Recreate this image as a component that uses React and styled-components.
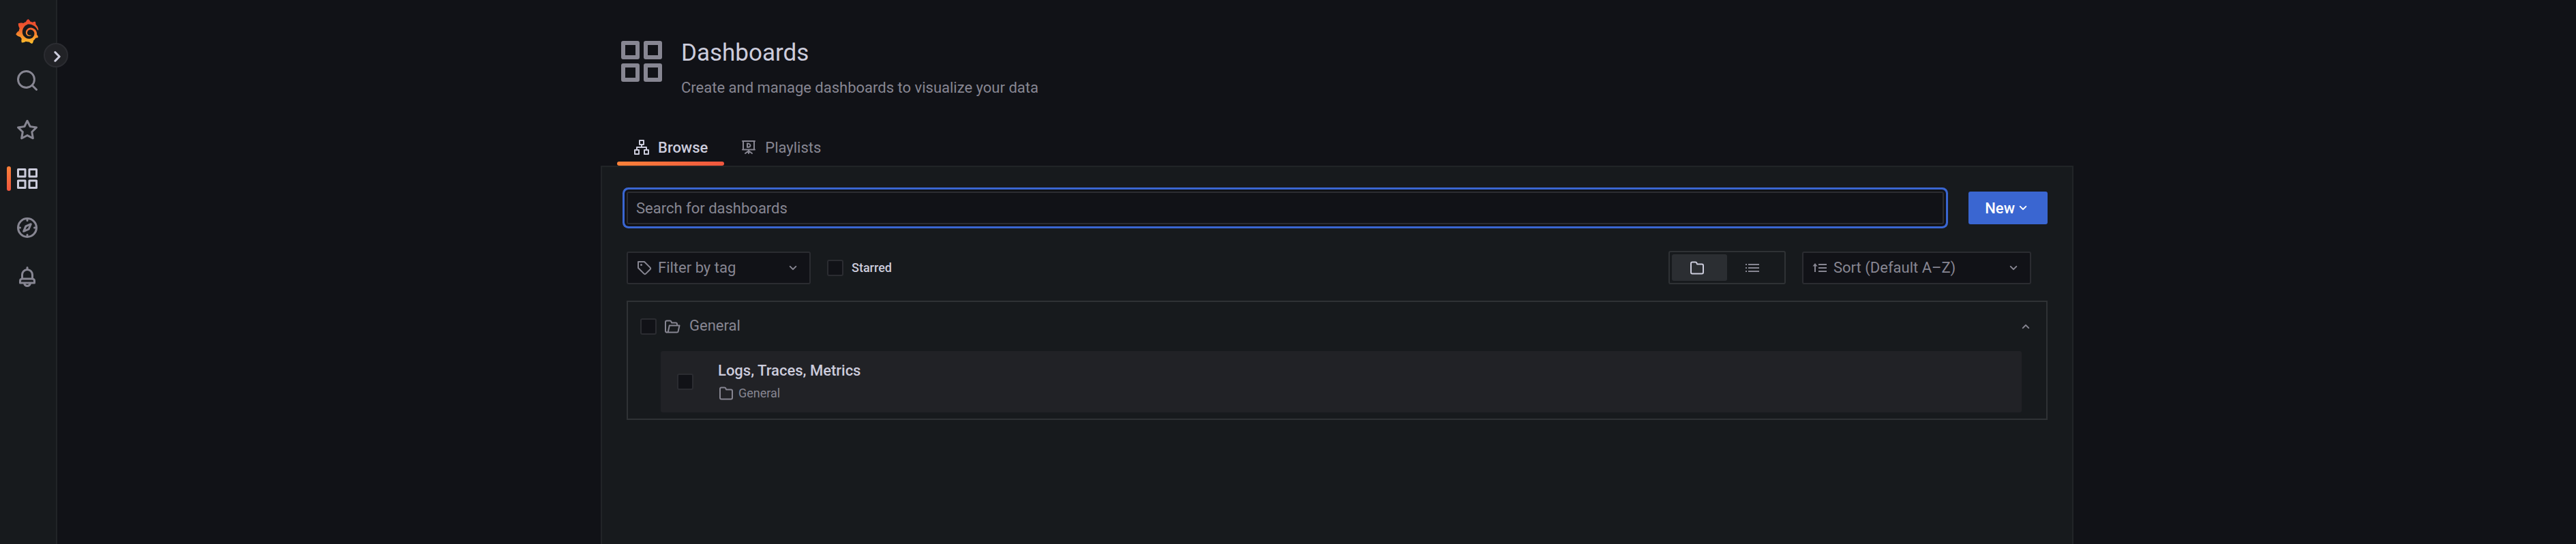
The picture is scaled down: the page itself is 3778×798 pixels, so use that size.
import React from "react";
import styled, { createGlobalStyle } from "styled-components";

const c = {
  canvas: "#111217",
  panel: "#171a1d",
  raised: "#212226",
  border: "#2b2c31",
  panelBorder: "#212427",
  sectionBorder: "#2f3235",
  text: "#ccccdc",
  muted: "#878692",
  blue: "#3a66d1",
};

const Global = createGlobalStyle`
  *, *::before, *::after { box-sizing: border-box; }
  body {
    margin: 0;
    background: ${c.canvas};
    color: ${c.text};
    font-family: Roboto, "Liberation Sans", sans-serif;
    font-size: 22px;
    line-height: 33px;
  }
  button, input, select { font: inherit; color: inherit; }
  h1, h2, h3, p { margin: 0; font-weight: 400; }
`;

const shapes = {
  search: <path d="M21.71,20.29,18,16.61A9,9,0,1,0,16.61,18l3.68,3.68a1,1,0,0,0,1.42,0A1,1,0,0,0,21.71,20.29ZM11,18a7,7,0,1,1,7-7A7,7,0,0,1,11,18Z" />,
  star: <path d="M22,9.67A1,1,0,0,0,21.14,9l-5.69-.83L12.9,3a1,1,0,0,0-1.8,0L8.55,8.16,2.86,9a1,1,0,0,0-.81.68,1,1,0,0,0,.25,1l4.13,4-1,5.68A1,1,0,0,0,6.9,21.44L12,18.77l5.1,2.67a.93.93,0,0,0,.46.12,1,1,0,0,0,.59-.19,1,1,0,0,0,.4-1l-1-5.68,4.13-4A1,1,0,0,0,22,9.67Zm-6.15,4a1,1,0,0,0-.29.88l.72,4.2-3.76-2a1.06,1.06,0,0,0-.94,0l-3.76,2,.72-4.2a1,1,0,0,0-.29-.88l-3-3,4.21-.61a1,1,0,0,0,.76-.55L12,5.7l1.88,3.82a1,1,0,0,0,.76.55l4.21.61Z" />,
  apps: <path d="M10,13H3a1,1,0,0,0-1,1v7a1,1,0,0,0,1,1h7a1,1,0,0,0,1-1V14A1,1,0,0,0,10,13ZM9,20H4V15H9ZM21,2H14a1,1,0,0,0-1,1v7a1,1,0,0,0,1,1h7a1,1,0,0,0,1-1V3A1,1,0,0,0,21,2ZM20,9H15V4h5Zm1,4H14a1,1,0,0,0-1,1v7a1,1,0,0,0,1,1h7a1,1,0,0,0,1-1V14A1,1,0,0,0,21,13Zm-1,7H15V15h5ZM10,2H3A1,1,0,0,0,2,3v7a1,1,0,0,0,1,1h7a1,1,0,0,0,1-1V3A1,1,0,0,0,10,2ZM9,9H4V4H9Z" />,
  compass: <path d="M12,2A10,10,0,1,0,22,12,10,10,0,0,0,12,2Zm1,17.93V19a1,1,0,0,0-2,0v.93A8,8,0,0,1,4.07,13H5a1,1,0,0,0,0-2H4.07A8,8,0,0,1,11,4.07V5a1,1,0,0,0,2,0V4.07A8,8,0,0,1,19.93,11H19a1,1,0,0,0,0,2h.93A8,8,0,0,1,13,19.93ZM15.14,7.55l-5,2.12a1,1,0,0,0-.52.52l-2.12,5a1,1,0,0,0,.21,1.1,1,1,0,0,0,.7.29.93.93,0,0,0,.4-.08l5-2.12a1,1,0,0,0,.52-.52l2.12-5a1,1,0,0,0-1.31-1.31Zm-2.49,5.1-2.28,1,1-2.28,2.28-1Z" />,
  bell: <path d="M18,13.18V10a6,6,0,0,0-5-5.91V3a1,1,0,0,0-2,0V4.09A6,6,0,0,0,6,10v3.18A3,3,0,0,0,4,16v2a1,1,0,0,0,1,1H8.14a4,4,0,0,0,7.72,0H19a1,1,0,0,0,1-1V16A3,3,0,0,0,18,13.18ZM8,10a4,4,0,0,1,8,0v3H8Zm4,10a2,2,0,0,1-1.72-1h3.44A2,2,0,0,1,12,20Zm6-3H6V16a1,1,0,0,1,1-1H17a1,1,0,0,1,1,1Z" />,
  down: <path d="M17,9.17a1,1,0,0,0-1.41,0L12,12.71,8.46,9.17a1,1,0,0,0-1.41,0,1,1,0,0,0,0,1.42l4.24,4.24a1,1,0,0,0,1.42,0L17,10.59A1,1,0,0,0,17,9.17Z" />,
  up: <path d="M17,13.41,12.71,9.17a1,1,0,0,0-1.42,0L7.05,13.41a1,1,0,0,0,0,1.42,1,1,0,0,0,1.41,0L12,11.29l3.54,3.54a1,1,0,0,0,.7.29,1,1,0,0,0,.71-.29A1,1,0,0,0,17,13.41Z" />,
  right: <path d="M14.83,11.29,10.59,7.05a1,1,0,0,0-1.42,0,1,1,0,0,0,0,1.41L12.71,12,9.17,15.54a1,1,0,0,0,0,1.41,1,1,0,0,0,.71.29,1,1,0,0,0,.71-.29l4.24-4.24A1,1,0,0,0,14.83,11.29Z" />,
  folder: <path d="M19,5.5H12.72l-.32-1a3,3,0,0,0-2.84-2H5a3,3,0,0,0-3,3v13a3,3,0,0,0,3,3H19a3,3,0,0,0,3-3V8.5A3,3,0,0,0,19,5.5Zm1,13a1,1,0,0,1-1,1H5a1,1,0,0,1-1-1V5.5a1,1,0,0,1,1-1H9.56a1,1,0,0,1,.95.68l.54,1.64A1,1,0,0,0,12,7.5h7a1,1,0,0,1,1,1Z" />,
  tag: <path d="M7.5,6A1.5,1.5,0,1,0,9,7.5,1.5,1.5,0,0,0,7.5,6Zm13.62,4.71L12.71,2.29A1,1,0,0,0,12,2H3A1,1,0,0,0,2,3v9a1,1,0,0,0,.29.71l8.42,8.41a3,3,0,0,0,4.24,0L21.12,15a3,3,0,0,0,0-4.24Zm-1.41,2.82h0l-6.18,6.17a1,1,0,0,1-1.41,0L4,11.59V4h7.59l8.12,8.12a1,1,0,0,1,.29.71A1,1,0,0,1,19.71,13.53Z" />,
  sitemap: (
    <g fill="none" stroke="currentColor" strokeWidth="2" strokeLinejoin="round">
      <path d="M9 2h6v6H9zM2 16h6v6H2zM16 16h6v6h-6zM12 8v4M5 16v-4h14v4" />
    </g>
  ),
  presentation: (
    <g fill="none" stroke="currentColor" strokeWidth="2" strokeLinecap="round" strokeLinejoin="round">
      <path d="M3 3h18M4 3v12M20 3v12M3 15.500h18M12 16v5M11 18l-4 3M13 18l4 3" />
      <path d="M10 6.500v5.500c3.500 0 4.500-1.500 4.500-2.700s-1.500-2.800-4.500-2.800z" />
    </g>
  ),
  list: (
    <g fill="none" stroke="currentColor" strokeWidth="2">
      <path d="M6 7h16M6 12h16M6 17h16M2 7h2M2 12h2M2 17h2" />
    </g>
  ),
  sort: (
    <g fill="none" stroke="currentColor" strokeWidth="2">
      <path d="M10 7h12M10 12h12M10 17h12M5 18V8" />
      <path d="M5 5L8.500 9.500H1.500z" fill="currentColor" stroke="none" />
    </g>
  ),
  folderOpen: (
    <g fill="none" stroke="currentColor" strokeWidth="2" strokeLinejoin="round">
      <path d="M18 10V8.500a2 2 0 0 0-2-2h-6l-.6-1.800a2 2 0 0 0-1.900-1.200H3a2 2 0 0 0-2 2V18.500a2 2 0 0 0 2 2" />
      <path d="M6.800 10.500H21.500L19.700 18.800a2 2 0 0 1-2 1.700H3a1.800 1.800 0 0 0 2-1.500z" />
    </g>
  ),
};

const Svg = styled.svg`
  display: block;
  flex: none;
  width: ${(p) => p.$size}px;
  height: ${(p) => p.$size}px;
  fill: currentColor;
  overflow: visible;
`;
const Icon = ({ name, size = 24 }) => (
  <Svg $size={size} viewBox="0 0 24 24" aria-hidden="true">{shapes[name]}</Svg>
);

const logoPath =
  "M85.01,40.8c-0.14-1.55-0.41-3.35-0.93-5.32c-0.51-1.97-1.28-4.13-2.39-6.37c-1.12-2.24-2.57-4.57-4.47-6.82c-0.74-0.88-1.54-1.76-2.42-2.6c1.3-5.17-1.59-9.65-1.59-9.65c-4.98-0.31-8.14,1.54-9.31,2.39c-0.2-0.08-0.39-0.17-0.59-0.25c-0.85-0.34-1.72-0.66-2.61-0.95c-0.89-0.28-1.81-0.54-2.74-0.76c-0.94-0.22-1.89-0.4-2.86-0.55c-0.17-0.03-0.34-0.05-0.51-0.07C52.45,2.87,46.2,0,46.2,0c-6.95,4.41-8.27,10.57-8.27,10.57s-0.03,0.14-0.07,0.36c-0.38,0.11-0.77,0.22-1.15,0.34c-0.53,0.16-1.06,0.36-1.59,0.55c-0.53,0.21-1.06,0.41-1.58,0.64c-1.05,0.45-2.09,0.96-3.1,1.53c-0.99,0.55-1.95,1.16-2.9,1.81c-0.14-0.06-0.24-0.11-0.24-0.11c-9.65-3.68-18.21,0.75-18.21,0.75c-0.78,10.26,3.86,16.73,4.78,17.91c-0.23,0.64-0.44,1.28-0.64,1.93c-0.72,2.33-1.25,4.72-1.57,7.18c-0.05,0.35-0.09,0.71-0.13,1.07C2.59,48.94,0,57.97,0,57.97c7.44,8.56,16.12,9.09,16.12,9.09c0.01-0.01,0.02-0.01,0.02-0.02c1.11,1.97,2.38,3.84,3.81,5.58c0.61,0.73,1.24,1.43,1.89,2.11c-2.71,7.77,0.38,14.22,0.38,14.22c8.29,0.31,13.74-3.63,14.88-4.53c0.82,0.28,1.66,0.53,2.51,0.74c2.55,0.66,5.15,1.04,7.75,1.16c0.65,0.03,1.3,0.04,1.94,0.04h0.31l0.21-0.01l0.41-0.01l0.4-0.02l0.01,0.01c3.91,5.57,10.77,6.36,10.77,6.36c4.88-5.15,5.16-10.25,5.16-11.36c0,0,0-0.04,0-0.07c0-0.09,0-0.15,0-0.15s0-0.07-0.01-0.23c1.02-0.72,2-1.49,2.93-2.32c1.95-1.75,3.65-3.77,5.07-5.97c0.13-0.21,0.26-0.42,0.39-0.63c5.52,0.32,9.41-3.42,9.41-3.42c-0.91-5.75-4.19-8.55-4.87-9.08l-0.07-0.05l-0.06-0.05l-0.06-0.04c0.03-0.35,0.06-0.69,0.08-1.04c0.04-0.62,0.06-1.24,0.06-1.85v-0.46v-0.23v-0.12l-0.02-0.38l-0.03-0.52c-0.01-0.18-0.02-0.34-0.04-0.5c-0.01-0.16-0.03-0.32-0.05-0.48l-0.06-0.48l-0.07-0.47c-0.09-0.63-0.21-1.26-0.36-1.88c-0.58-2.47-1.54-4.82-2.82-6.93c-1.28-2.11-2.86-3.98-4.65-5.56c-1.79-1.58-3.79-2.85-5.9-3.8c-2.1-0.95-4.31-1.56-6.5-1.83c-1.1-0.14-2.19-0.2-3.27-0.18l-0.41,0.01l-0.41,0.01l-0.4,0.03c-0.15,0.01-0.31,0.02-0.45,0.04c-0.56,0.05-1.11,0.13-1.66,0.23c-2.18,0.41-4.24,1.2-6.06,2.28c-1.82,1.09-3.39,2.45-4.68,3.98c-1.28,1.54-2.28,3.24-2.96,5c-0.69,1.76-1.07,3.58-1.18,5.35c-0.03,0.44-0.04,0.88-0.03,1.32c0,0.11,0,0.22,0.01,0.33l0.01,0.35c0.02,0.21,0.03,0.42,0.05,0.63c0.09,0.9,0.25,1.75,0.49,2.58c0.48,1.66,1.25,3.15,2.2,4.43c0.95,1.28,2.08,2.33,3.28,3.15c1.2,0.82,2.49,1.41,3.76,1.79c1.27,0.38,2.54,0.54,3.74,0.53c1.2-0.02,2.3-0.2,3.3-0.55c0.52-0.17,1.01-0.38,1.46-0.61c0.45-0.24,0.87-0.5,1.26-0.77c0.11-0.08,0.22-0.16,0.33-0.25c0.42-0.33,0.48-0.94,0.15-1.35c-0.29-0.36-0.79-0.45-1.19-0.23c-0.1,0.05-0.2,0.11-0.3,0.16c-0.35,0.17-0.71,0.32-1.09,0.45c-1.2,0.4-2.3,0.45-3.4,0.35c-0.93-0.13-1.88-0.4-2.79-0.82c-0.91-0.41-1.79-0.98-2.57-1.69c-0.79-0.71-1.48-1.56-2.01-2.52c-0.54-0.96-0.92-2.03-1.09-3.16c-0.09-0.56-0.13-1.14-0.11-1.71c0.01-0.5,0.08-1.2,0.18-1.83c0.43-2.45,1.65-4.83,3.55-6.65c0.47-0.45,0.98-0.87,1.53-1.25c0.55-0.38,1.12-0.71,1.73-0.99c0.6-0.28,1.23-0.5,1.88-0.68c0.65-0.17,1.31-0.29,1.98-0.35c0.34-0.03,0.67-0.04,1.01-0.04c0.4,0,0.7,0.02,1.04,0.04c0.73,0.06,1.46,0.16,2.17,0.32c1.43,0.32,2.83,0.85,4.13,1.57c2.6,1.44,4.81,3.69,6.17,6.4c0.69,1.35,1.16,2.81,1.4,4.31c0.2,1.3,0.22,2.4,0.16,3.45c-0.03,0.42-0.07,0.83-0.12,1.24c-0.05,0.41-0.12,0.82-0.19,1.22c-0.08,0.4-0.17,0.81-0.27,1.21c-0.2,0.8-0.46,1.59-0.76,2.36c-0.61,1.54-1.42,3-2.4,4.36c-1.96,2.7-4.64,4.9-7.69,6.29c-1.52,0.69-3.13,1.19-4.78,1.47c-0.82,0.14-1.66,0.22-2.5,0.25c-0.9,0.03-1.8,0-2.62-0.06c-1.79-0.13-3.55-0.45-5.27-0.95c-1.71-0.49-3.38-1.16-4.95-2c-3.14-1.68-5.95-3.98-8.15-6.76c-1.11-1.38-2.07-2.87-2.87-4.43c-0.8-1.56-1.42-3.2-1.89-4.88c-0.46-1.68-0.75-3.39-0.86-5.12c-0.1-2,0-3.6,0.21-5.26c0.11-0.88,0.26-1.76,0.44-2.63c0.18-0.87,0.39-1.74,0.64-2.59c0.49-1.71,1.1-3.36,1.82-4.92c1.44-3.12,3.34-5.88,5.61-8.09c0.57-0.55,1.16-1.08,1.77-1.57c0.61-0.49,1.25-0.95,1.9-1.37c0.65-0.43,1.32-0.82,2.02-1.18c1.2-0.6,2.3-1.1,3.45-1.5C41,19.6,45.500,19,50,19.100C57,19.400,64,22,70,26.400C75.500,30.600,79.500,35.800,82.300,41.600c0.6,1.2,2.9,1.5,2.71-0.8z";

const Logo = () => (
  <Svg $size={36} viewBox="0 0 86 93" aria-hidden="true">
    <defs>
      <linearGradient id="flame" x1="0" y1="0" x2="0" y2="1">
        <stop offset="0" stopColor="#ea4530" />
        <stop offset="0.35" stopColor="#f05a2d" />
        <stop offset="1" stopColor="#fbc02c" />
      </linearGradient>
    </defs>
    <path fill="url(#flame)" d={logoPath} />
  </Svg>
);

const Shell = styled.div`
  display: flex;
  min-height: 100vh;
`;
const Sidebar = styled.nav`
  position: relative;
  flex: none;
  width: 84px;
  padding: 28px 22px;
  background: ${c.panel};
  border-right: 2px solid ${c.panelBorder};
`;
const NavList = styled.ul`
  display: flex;
  flex-direction: column;
  gap: 36px;
  margin: 0;
  padding: 0;
  list-style: none;
`;
const NavLink = styled.a`
  position: relative;
  display: block;
  color: ${(p) => (p.$active ? c.text : c.muted)};
  &::before {
    content: "";
    display: ${(p) => (p.$active ? "block" : "none")};
    position: absolute;
    left: -12px;
    top: 0;
    width: 6px;
    height: 36px;
    border-radius: 3px;
    background: linear-gradient(#fa8139, #f0563e);
  }
`;
const Expand = styled.button`
  position: absolute;
  top: 63px;
  right: -18px;
  display: grid;
  place-items: center;
  width: 36px;
  height: 36px;
  padding: 0;
  border: 2px solid ${c.border};
  border-radius: 50%;
  background: ${c.raised};
`;

const Main = styled.main`
  flex: 1;
  display: flex;
  justify-content: center;
  min-width: 0;
  padding-left: 60px;
`;
const Page = styled.div`
  display: flex;
  flex-direction: column;
  width: 100%;
  max-width: 2160px;
`;
const Header = styled.header`
  display: flex;
  gap: 22px;
  padding: 54px 24px 0;
  color: ${c.muted};
`;
const Title = styled.h1`
  color: ${c.text};
  font-size: 35px;
  line-height: 48px;
`;
const Subtitle = styled.p`
  margin-top: 10px;
`;
const Tabs = styled.div`
  display: flex;
  margin-top: 46px;
  padding: 0 24px;
`;
const Tab = styled.a`
  position: relative;
  display: flex;
  align-items: center;
  gap: 12px;
  height: 52px;
  padding: 0 24px 2px;
  color: ${(p) => (p.$active ? c.text : c.muted)};
  font-weight: ${(p) => (p.$active ? 500 : 400)};
  text-decoration: none;
  &::after {
    content: "";
    display: ${(p) => (p.$active ? "block" : "none")};
    position: absolute;
    inset: auto 0 0;
    height: 6px;
    border-radius: 3px;
    background: linear-gradient(90deg, #fa8139, #f0563e);
  }
`;
const Panel = styled.section`
  flex: 1;
  padding: 36px;
  background: ${c.panel};
  border: 2px solid ${c.panelBorder};
  border-bottom: 0;
`;
const SearchRow = styled.div`
  display: flex;
  gap: 36px;
`;
const SearchInput = styled.input`
  flex: 1;
  min-width: 0;
  height: 48px;
  padding: 0 12px;
  border: 2px solid ${c.border};
  border-radius: 3px;
  outline: none;
  background: ${c.canvas};
  box-shadow: 0 0 0 3px ${c.canvas}, 0 0 0 6px ${c.blue};
  &::placeholder { color: ${c.muted}; opacity: 1; }
`;
const NewButton = styled.button`
  display: flex;
  align-items: center;
  height: 48px;
  padding: 0 24px;
  border: 0;
  border-radius: 3px;
  background: ${c.blue};
  color: #fff;
  font-weight: 500;
`;
const FilterRow = styled.div`
  display: flex;
  align-items: center;
  gap: 24px;
  margin-top: 39px;
  padding-right: 24px;
`;
const Picker = styled.div`
  display: grid;
  grid-template-columns: 24px 1fr 24px;
  align-items: center;
  width: ${(p) => p.$width}px;
  height: 48px;
  padding: 0 12px;
  border: 2px solid ${c.border};
  border-radius: 3px;
  background: ${c.canvas};
  color: ${c.muted};
  > svg { grid-row: 1; pointer-events: none; }
  > svg:first-child { grid-column: 1; }
  > svg:last-child { grid-column: 3; }
`;
const Select = styled.select`
  grid-area: 1 / 1 / 2 / 4;
  width: 100%;
  height: 44px;
  padding: 0 0 0 32px;
  border: 0;
  outline: none;
  appearance: none;
  background: transparent;
`;
const CheckLabel = styled.label`
  display: flex;
  align-items: center;
  gap: 12px;
  margin-right: auto;
  font-size: 18px;
  font-weight: 500;
`;
const Check = styled.input`
  flex: none;
  width: 24px;
  height: 24px;
  margin: 0;
  appearance: none;
  border: 2px solid ${c.border};
  border-radius: 3px;
  background: ${c.canvas};
`;
const Views = styled.div`
  display: flex;
  padding: 3px;
  border: 2px solid ${c.sectionBorder};
  border-radius: 3px;
`;
const View = styled.label`
  display: grid;
  place-items: center;
  width: 81px;
  height: 39px;
  padding-right: 8px;
  border-radius: 3px;
  color: ${c.muted};
  &:has(input:checked) {
    background: #2b2e32;
    color: ${c.text};
  }
  input {
    position: absolute;
    appearance: none;
    margin: 0;
  }
`;
const Folder = styled.section`
  margin-top: 24px;
  padding-bottom: 9px;
  border: 2px solid ${c.sectionBorder};
`;
const FolderHead = styled.header`
  display: flex;
  align-items: center;
  gap: 12px;
  height: 72px;
  padding: 0 18px;
  color: ${c.muted};
`;
const FolderName = styled.h2`
  flex: 1;
  padding-bottom: 4px;
  font-size: 22px;
  line-height: 33px;
`;
const Toggle = styled.button`
  display: block;
  padding: 0;
  border: 0;
  background: none;
`;
const Item = styled.article`
  display: flex;
  align-items: center;
  gap: 36px;
  height: 90px;
  margin: 0 36px 0 48px;
  padding: 0 24px;
  border-radius: 3px;
  background: ${c.raised};
`;
const ItemTitle = styled.h3`
  font-size: 22px;
  line-height: 33px;
  font-weight: 500;
`;
const ItemFolder = styled.a`
  display: flex;
  align-items: center;
  gap: 6px;
  color: ${c.muted};
  font-size: 18px;
  text-decoration: none;
`;

const nav = [
  ["search", "Search"],
  ["star", "Starred"],
  ["apps", "Dashboards"],
  ["compass", "Explore"],
  ["bell", "Alerting"],
];

export default function App() {
  return (
    <Shell>
      <Global />
      <Sidebar aria-label="Main">
        <NavList>
          <li><NavLink href="#home" aria-label="Home"><Logo /></NavLink></li>
          {nav.map(([icon, label]) => (
            <li key={icon}>
              <NavLink href={`#${icon}`} aria-label={label} $active={icon === "apps"}>
                <Icon name={icon} size={36} />
              </NavLink>
            </li>
          ))}
        </NavList>
        <Expand aria-label="Expand menu"><Icon name="right" size={36} /></Expand>
      </Sidebar>
      <Main>
        <Page>
          <Header>
            <Icon name="apps" size={72} />
            <div>
              <Title>Dashboards</Title>
              <Subtitle>Create and manage dashboards to visualize your data</Subtitle>
            </div>
          </Header>
          <Tabs>
            <Tab href="#browse" $active><Icon name="sitemap" />Browse</Tab>
            <Tab href="#playlists"><Icon name="presentation" />Playlists</Tab>
          </Tabs>
          <Panel>
            <SearchRow>
              <SearchInput aria-label="Search for dashboards" placeholder="Search for dashboards" />
              <NewButton>New<Icon name="down" /></NewButton>
            </SearchRow>
            <FilterRow>
              <Picker $width={270}>
                <Icon name="tag" />
                <Select aria-label="Tag"><option>Filter by tag</option></Select>
                <Icon name="down" />
              </Picker>
              <CheckLabel><Check type="checkbox" />Starred</CheckLabel>
              <Views>
                <View><input type="radio" name="view" aria-label="Folders" defaultChecked /><Icon name="folder" /></View>
                <View><input type="radio" name="view" aria-label="List" /><Icon name="list" /></View>
              </Views>
              <Picker $width={336}>
                <Icon name="sort" />
                <Select aria-label="Sort"><option>Sort (Default A–Z)</option></Select>
                <Icon name="down" />
              </Picker>
            </FilterRow>
            <Folder>
              <FolderHead>
                <Check type="checkbox" aria-label="Select folder General" />
                <Icon name="folderOpen" />
                <FolderName>General</FolderName>
                <Toggle aria-label="Collapse folder"><Icon name="up" /></Toggle>
              </FolderHead>
              <Item>
                <Check type="checkbox" aria-label="Select Logs, Traces, Metrics" />
                <div>
                  <ItemTitle>Logs, Traces, Metrics</ItemTitle>
                  <ItemFolder href="#general"><Icon name="folder" />General</ItemFolder>
                </div>
              </Item>
            </Folder>
          </Panel>
        </Page>
      </Main>
    </Shell>
  );
}
